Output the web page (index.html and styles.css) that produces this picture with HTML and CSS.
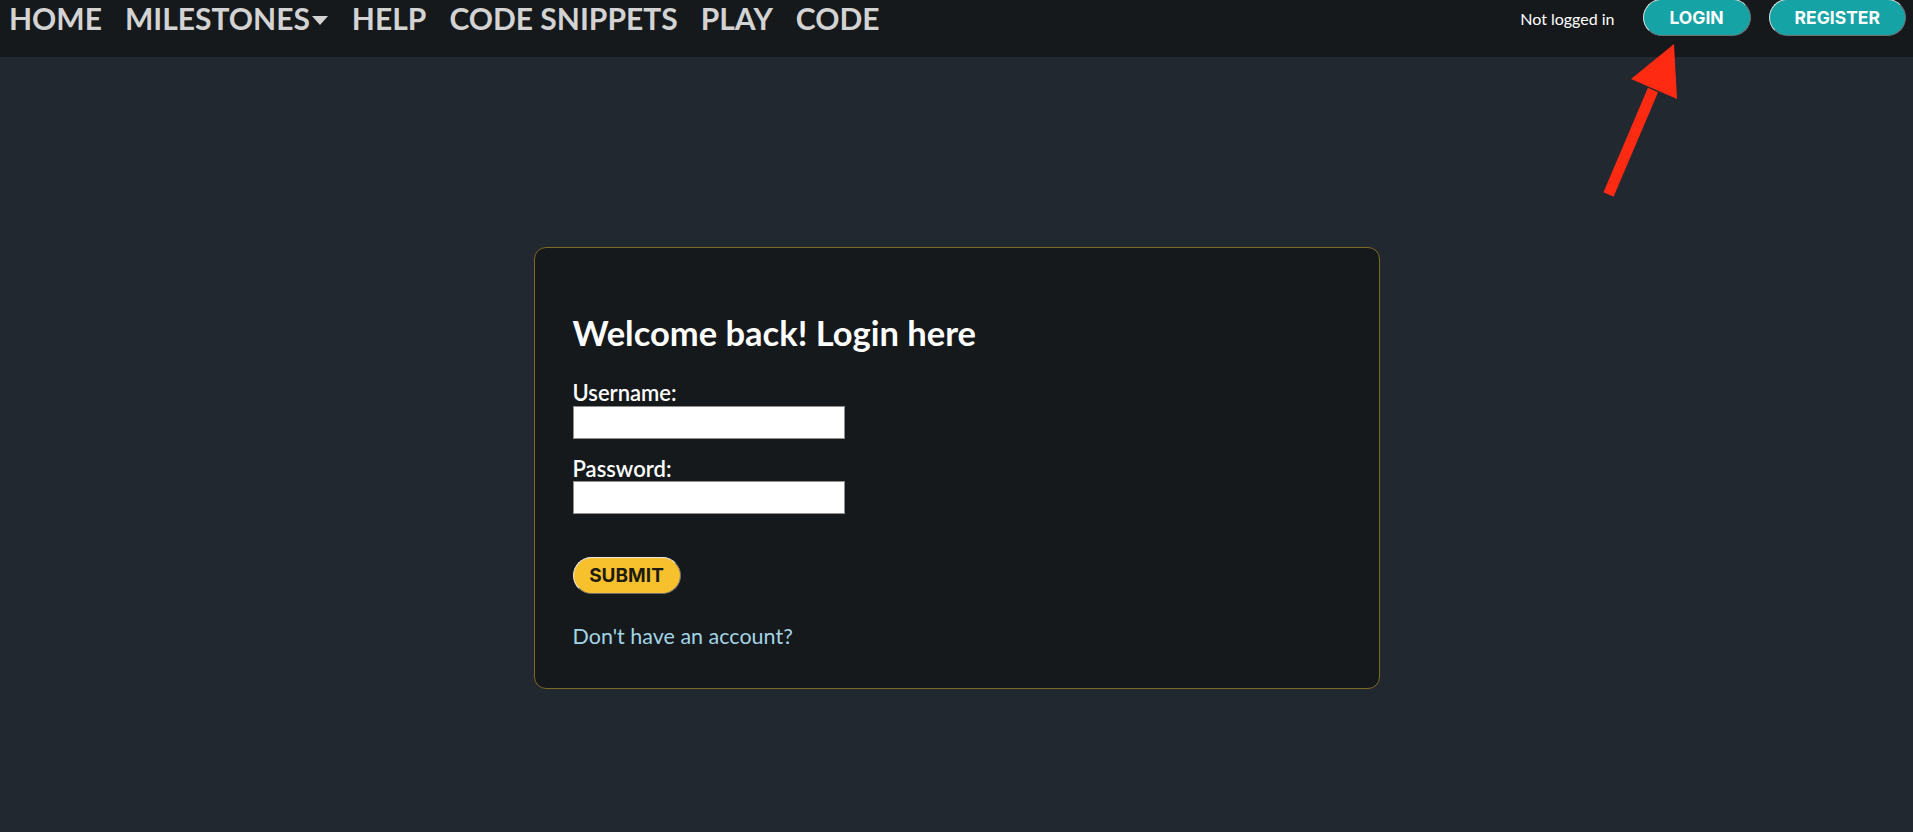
FILE: index.html
```html
<!DOCTYPE html>
<html lang="en">
<head>
<meta charset="utf-8">
<title>Login</title>
<link rel="stylesheet" href="styles.css">
</head>
<body>
<nav class="topnav">
  <ul class="nav-links">
    <li><a href="#">HOME</a></li>
    <li><a href="#">MILESTONES<span class="caret"></span></a></li>
    <li><a href="#">HELP</a></li>
    <li><a href="#">CODE SNIPPETS</a></li>
    <li><a href="#">PLAY</a></li>
    <li><a href="#">CODE</a></li>
  </ul>
  <div class="nav-user">
    <span class="status">Not logged in</span>
    <a class="pill" href="#">LOGIN</a>
    <a class="pill" href="#">REGISTER</a>
  </div>
</nav>

<main class="page">
  <section class="card">
    <h2 class="card-title">Welcome back! Login here</h2>
    <form class="login-form">
      <div class="field">
        <label for="username">Username:</label>
        <input id="username" type="text">
      </div>
      <div class="field">
        <label for="password">Password:</label>
        <input id="password" type="password">
      </div>
      <button class="submit" type="button">SUBMIT</button>
    </form>
    <a class="signup" href="#">Don't have an account?</a>
  </section>
</main>

<svg class="arrow" width="100" height="170" viewBox="0 0 100 170">
  <line x1="63" y1="50" x2="18.5" y2="154.5" stroke="#ff2a12" stroke-width="11"/>
  <polygon points="84,4 41,39 87,59" fill="#ff2a12"/>
</svg>
</body>
</html>
```

FILE: styles.css
```css
html, body {
  margin: 0;
  padding: 0;
}

body {
  background: #212830;
  font-family: Lato, "Noto Sans", sans-serif;
  color: #fff;
  min-height: 832px;
  position: relative;
}

.topnav {
  display: flex;
  justify-content: space-between;
  align-items: flex-start;
  height: 57px;
  background: #16191c;
}

.nav-links {
  display: flex;
  list-style: none;
  margin: 0;
  padding: 0 0 0 9px;
  gap: 23px;
}

.nav-links a {
  display: flex;
  align-items: center;
  font-size: 30px;
  font-weight: 700;
  line-height: 36px;
  color: #d3d3d3;
  text-decoration: none;
}

.caret {
  display: inline-block;
  width: 0;
  height: 0;
  margin: 4px 1px 0 2px;
  border-left: 8px solid transparent;
  border-right: 8px solid transparent;
  border-top: 9px solid #d3d3d3;
}

.nav-user {
  display: flex;
  align-items: center;
  height: 36px;
  padding-right: 7px;
}

.status {
  font-size: 16px;
  color: #fff;
  margin-right: 28px;
}

.pill {
  display: flex;
  align-items: center;
  justify-content: center;
  box-sizing: border-box;
  min-width: 108px;
  height: 37px;
  margin-top: -1px;
  padding: 0 25px;
  border-radius: 19px;
  background: #15a3a6;
  border: 1px solid;
  border-color: #e0e0e0 #6f6f6f #6f6f6f #e0e0e0;
  color: #fff;
  font-family: Inter, "Liberation Sans", sans-serif;
  font-weight: 700;
  font-size: 17.5px;
  text-decoration: none;
}

.pill + .pill {
  margin-left: 18px;
}

.page {
  display: flex;
  justify-content: center;
  padding-top: 190px;
}

.card {
  box-sizing: border-box;
  width: 846px;
  padding: 38px 38px 40px 38px;
  background: #16191c;
  border: 1px solid #7d6b24;
  border-radius: 12px;
}

.card-title {
  margin: 26px 0 28px;
  font-size: 34.5px;
  font-weight: 700;
  line-height: 1.2;
}

.login-form {
  margin: 0;
}

.field {
  margin-bottom: 18px;
}

.field label {
  display: block;
  font-size: 22px;
  font-weight: 600;
  line-height: 24px;
}

.field input {
  display: block;
  box-sizing: border-box;
  width: 272px;
  height: 33px;
  margin: 1px 0 0;
  border: 1px solid #8f8f8f;
  background: #fff;
}

.field + .field input {
  margin-top: 0;
}

.submit {
  display: block;
  box-sizing: border-box;
  margin-top: 43px;
  width: 108px;
  height: 37px;
  padding: 0;
  border-radius: 19px;
  background: #f7c12e;
  border: 1px solid;
  border-color: #e8e8e8 #6f6f6f #6f6f6f #e8e8e8;
  color: #1e1c10;
  font-family: Inter, "Liberation Sans", sans-serif;
  font-weight: 700;
  font-size: 19px;
}

.signup {
  display: block;
  margin-top: 30px;
  font-size: 21.5px;
  line-height: 24px;
  color: #a3d5e6;
  text-decoration: none;
}

.arrow {
  position: absolute;
  left: 1590px;
  top: 40px;
}
```
